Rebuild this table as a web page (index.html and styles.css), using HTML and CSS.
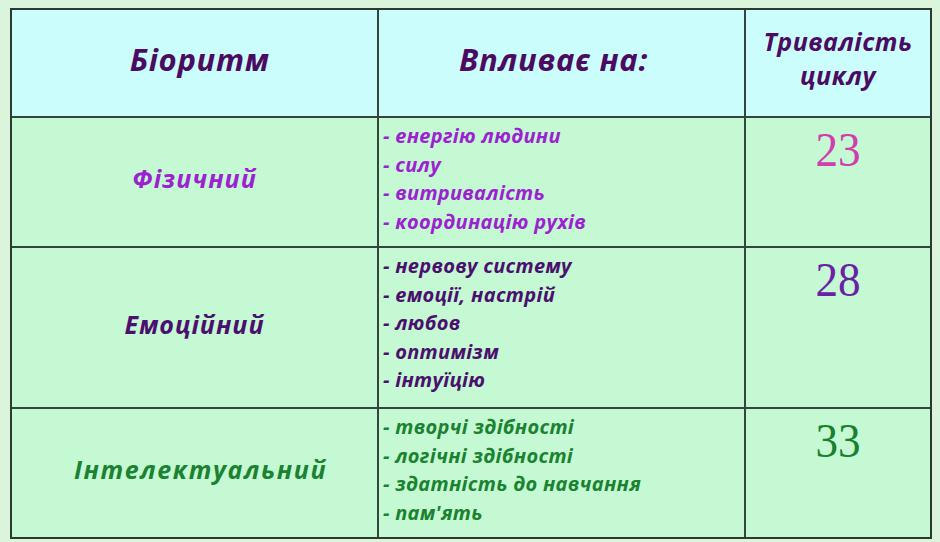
FILE: index.html
```html
<!DOCTYPE html>
<html lang="uk">
<head>
<meta charset="utf-8">
<title>Біоритми</title>
<link rel="stylesheet" href="styles.css">
</head>
<body>
<div class="page">
  <div class="table">
    <div class="cell head head-first"><span class="h-big">Біоритм</span></div>
    <div class="cell head head-second"><span class="h-big">Впливає на:</span></div>
    <div class="cell head"><span class="h-small">Тривалість<br>циклу</span></div>

    <div class="cell name physical">Фізичний</div>
    <div class="cell list physical">
      <div>- енергію людини</div>
      <div>- силу</div>
      <div>- витривалість</div>
      <div>- координацію рухів</div>
    </div>
    <div class="cell num"><span class="digits n-physical">23</span></div>

    <div class="cell name emotional">Емоційний</div>
    <div class="cell list emotional">
      <div>- нервову систему</div>
      <div>- емоції, настрій</div>
      <div>- любов</div>
      <div>- оптимізм</div>
      <div>- інтуїцію</div>
    </div>
    <div class="cell num"><span class="digits n-emotional">28</span></div>

    <div class="cell name intellectual">Інтелектуальний</div>
    <div class="cell list intellectual">
      <div>- творчі здібності</div>
      <div>- логічні здібності</div>
      <div>- здатність до навчання</div>
      <div>- пам'ять</div>
    </div>
    <div class="cell num"><span class="digits n-intellectual">33</span></div>
  </div>
</div>
</body>
</html>
```
FILE: styles.css
```css
html, body {
  margin: 0;
  padding: 0;
  background: #daf5dc;
}
.page {
  width: 940px;
  height: 542px;
  box-sizing: border-box;
  padding: 8px 0 0 10px;
  font-family: "Open Sans", "DejaVu Sans", sans-serif;
  font-style: italic;
  font-weight: 700;
}
.table {
  display: grid;
  grid-template-columns: 365px 365px 184px;
  grid-template-rows: 106px 128px 159px 128px;
  gap: 2px;
  width: 918px;
  border: 2px solid #2b3a31;
  background: #34463b;
}
.cell {
  background: #c4f9d3;
}
.head {
  background: #ccfdfd;
  display: flex;
  align-items: center;
  justify-content: center;
  text-align: center;
  color: #4a0b60;
}
.head-first {
  padding-left: 10px;
}
.head-second {
  padding-right: 16px;
}
.h-big {
  font-size: 31px;
  letter-spacing: 0.7px;
  padding-bottom: 8px;
}
.h-small {
  font-size: 25px;
  letter-spacing: 0.5px;
  line-height: 34px;
  padding-bottom: 10px;
}
.name {
  display: flex;
  align-items: center;
  justify-content: center;
  font-size: 25px;
  letter-spacing: 1px;
  padding-bottom: 8px;
}
.name.intellectual {
  letter-spacing: 1.6px;
  padding-left: 12px;
}
.list {
  font-size: 20px;
  letter-spacing: 0.3px;
  line-height: 28.5px;
  padding: 4px 0 0 4px;
}
.num {
  display: flex;
  justify-content: center;
  padding-top: 8px;
}
.digits {
  display: inline-block;
  font-family: "Liberation Serif", "Times New Roman", serif;
  font-style: normal;
  font-weight: 400;
  font-size: 48px;
  line-height: 1;
  transform: scaleX(0.94);
}
.physical { color: #9d22cf; }
.emotional { color: #4b0f6d; }
.intellectual { color: #1a8230; }
.n-physical { color: #d13cae; }
.n-emotional { color: #6a21a6; }
.n-intellectual { color: #1a7f2e; }
```
